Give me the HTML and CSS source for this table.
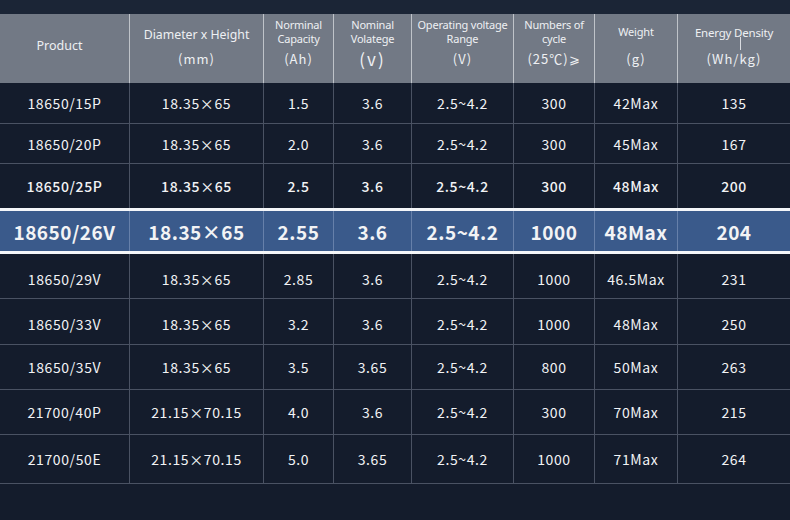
FILE: index.html
```html
<!DOCTYPE html>
<html>
<head>
<meta charset="utf-8">
<link rel="stylesheet" href="styles.css">
</head>
<body>
<div class="page">
  <div class="topband"></div>
  <div class="table">
    <div class="row head">
      <div class="hc solo"><span class="lbl1">Product</span></div>
      <div class="hc"><div class="lbl lbl-low">Diameter x Height</div><div class="unit">(mm)</div></div>
      <div class="hc"><div class="lbl">Norminal<br>Capacity</div><div class="unit">(Ah)</div></div>
      <div class="hc"><div class="lbl">Nominal<br>Volatege</div><div class="unit big">(v)</div></div>
      <div class="hc"><div class="lbl">Operating voltage<br>Range</div><div class="unit">(V)</div></div>
      <div class="hc"><div class="lbl">Numbers of<br>cycle</div><div class="unit">(25℃)⩾</div></div>
      <div class="hc"><div class="lbl">Weight</div><div class="unit">(g)</div></div>
      <div class="hc tick-cell"><div class="lbl lbl-mid">Energy Density</div><div class="unit">(Wh/kg)</div><span class="tick"></span></div>
    </div>

    <div class="row h41"><div>18650/15P</div><div>18.35×65</div><div>1.5</div><div>3.6</div><div>2.5~4.2</div><div>300</div><div>42Max</div><div>135</div></div>
    <div class="row h40"><div>18650/20P</div><div>18.35×65</div><div>2.0</div><div>3.6</div><div>2.5~4.2</div><div>300</div><div>45Max</div><div>167</div></div>
    <div class="row h44 medium"><div>18650/25P</div><div>18.35×65</div><div>2.5</div><div>3.6</div><div>2.5~4.2</div><div>300</div><div>48Max</div><div>200</div></div>
    <div class="row hl"><div>18650/26V</div><div>18.35×65</div><div>2.55</div><div>3.6</div><div>2.5~4.2</div><div>1000</div><div>48Max</div><div>204</div></div>
    <div class="row h45 low"><div>18650/29V</div><div>18.35×65</div><div>2.85</div><div>3.6</div><div>2.5~4.2</div><div>1000</div><div>46.5Max</div><div>231</div></div>
    <div class="row h46 low"><div>18650/33V</div><div>18.35×65</div><div>3.2</div><div>3.6</div><div>2.5~4.2</div><div>1000</div><div>48Max</div><div>250</div></div>
    <div class="row h45"><div>18650/35V</div><div>18.35×65</div><div>3.5</div><div>3.65</div><div>2.5~4.2</div><div>800</div><div>50Max</div><div>263</div></div>
    <div class="row h45"><div>21700/40P</div><div>21.15×70.15</div><div>4.0</div><div>3.6</div><div>2.5~4.2</div><div>300</div><div>70Max</div><div>215</div></div>
    <div class="row h49"><div>21700/50E</div><div>21.15×70.15</div><div>5.0</div><div>3.65</div><div>2.5~4.2</div><div>1000</div><div>71Max</div><div>264</div></div>
  </div>
</div>
</body>
</html>
```

FILE: styles.css
```css
html, body {
  margin: 0;
  padding: 0;
  background: #141c2c;
}

.page {
  width: 790px;
  height: 520px;
  overflow: hidden;
  background: #141c2c;
  font-family: "Noto Sans CJK SC", "Noto Sans", sans-serif;
  color: #f2f3f5;
}

.topband {
  height: 14px;
  background: #1b2536;
}

.row {
  display: grid;
  grid-template-columns: 129px 134px 70px 78px 102px 81px 83px 1fr;
  box-sizing: border-box;
  border-bottom: 1px solid #4a5263;
}

.row > div {
  display: flex;
  align-items: center;
  justify-content: center;
  box-sizing: border-box;
  border-left: 1px solid #4a5263;
  font-size: 14px;
  letter-spacing: 0.6px;
  white-space: nowrap;
}

.row > div:first-child {
  border-left: none;
}

.h40 { height: 40px; }
.h41 { height: 41px; }
.h44 { height: 44px; border-bottom: none; }
.h45 { height: 45px; }
.h46 { height: 46px; }
.h49 { height: 49px; }

.low > div {
  padding-top: 5px;
}

.medium > div {
  font-weight: 500;
}

.hl {
  height: 46px;
  background: #3a5a8b;
  border-top: 3px solid #f4f6f9;
  border-bottom: 3px solid #f4f6f9;
}

.hl > div {
  font-size: 19px;
  font-weight: 700;
  letter-spacing: 0.5px;
  border-left-color: #6680aa;
  padding-top: 1px;
}

/* header */
.head {
  height: 69px;
  background: #727985;
  border-bottom: none;
}

.head > .hc {
  display: flex;
  flex-direction: column;
  align-items: center;
  justify-content: flex-start;
  border-left: 1px solid #bfc3c9;
  color: #eef0f3;
  letter-spacing: 0;
  position: relative;
}

.head > .hc:first-child {
  border-left: none;
}

.head > .hc.solo {
  justify-content: center;
  padding-bottom: 6px;
  padding-right: 10px;
}

.lbl1 {
  font-family: "Noto Sans", sans-serif;
  font-size: 12.5px;
}

.lbl {
  height: 34px;
  margin-top: 1px;
  display: flex;
  align-items: center;
  justify-content: center;
  text-align: center;
  font-family: "Noto Sans", sans-serif;
  font-size: 11px;
  line-height: 14px;
  letter-spacing: -0.2px;
}

.lbl-low {
  font-size: 12.3px;
  letter-spacing: 0;
  padding-top: 6px;
  box-sizing: border-box;
}

.lbl-mid {
  font-size: 11.5px;
  padding-top: 2px;
  box-sizing: border-box;
}

.unit {
  height: 20px;
  line-height: 20px;
  font-family: "Noto Sans CJK SC", sans-serif;
  font-size: 13px;
  letter-spacing: 1px;
}

.unit.big {
  font-size: 17px;
  letter-spacing: 2px;
}

.tick {
  position: absolute;
  left: 62px;
  top: 23px;
  width: 1px;
  height: 13px;
  background: #d9dce1;
}
```
